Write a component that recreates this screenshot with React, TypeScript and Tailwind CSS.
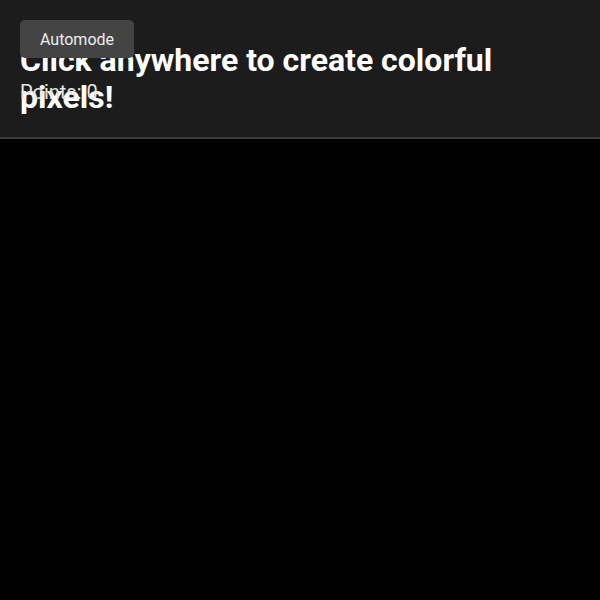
import React from "react";

export default function App() {
  return (
    <div className="w-[600px] h-[600px] bg-black overflow-hidden" style={{ fontFamily: "Roboto, 'Noto Sans', sans-serif" }}>
      <header className="relative bg-[#1c1c1c] border-b-2 border-[#3c3c3c] px-5 pt-[42px] h-[139px]">
        <h1 className="max-w-[520px] text-[32px] leading-[37px] font-bold text-white h-[36px]">
          Click anywhere to create colorful pixels!
        </h1>
        <p className="text-xl leading-7 text-[#e6e6e6]">Points: 0</p>
        <button className="absolute top-5 left-5 w-[114px] h-[38px] pt-[2px] rounded-[5px] bg-[#444444] text-[#eeeeee] text-base leading-6">
          Automode
        </button>
      </header>
    </div>
  );
}
